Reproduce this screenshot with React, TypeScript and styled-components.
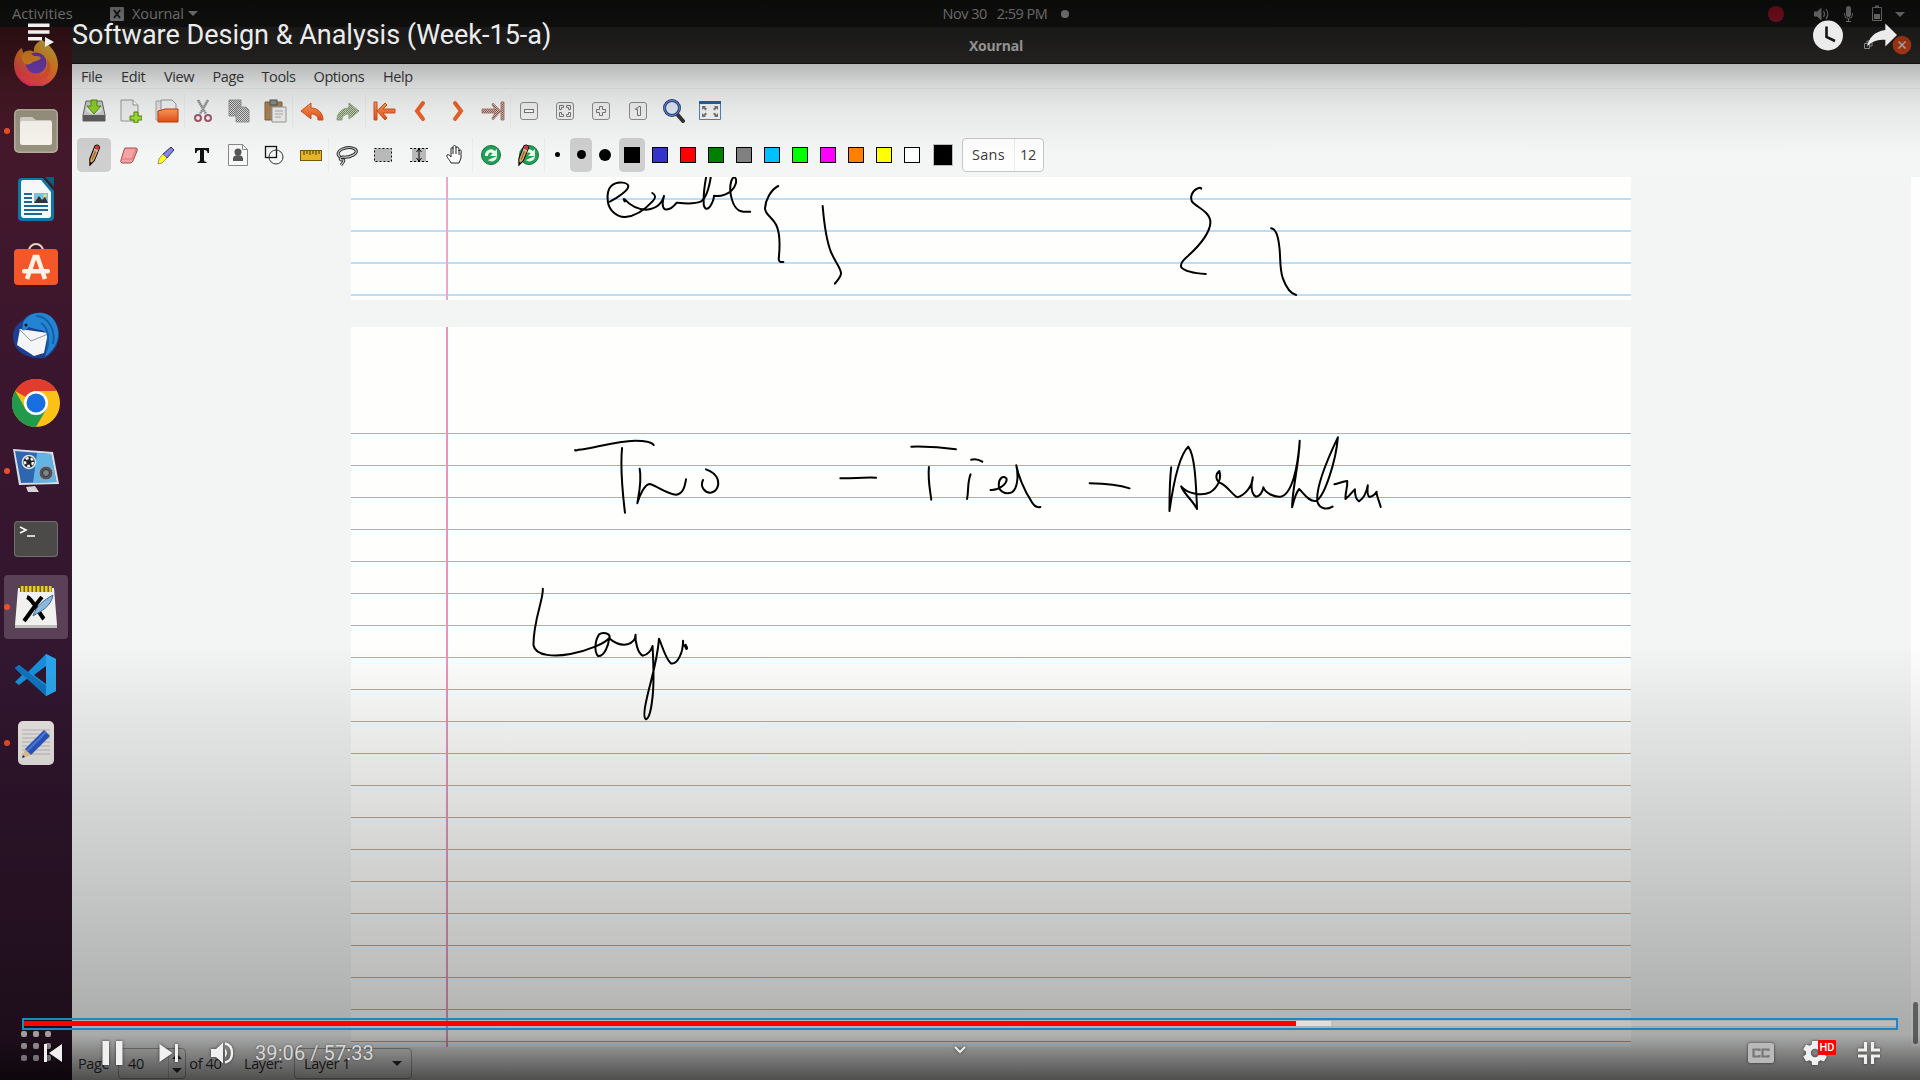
import React from "react";
import styled, { createGlobalStyle, css } from "styled-components";

const GlobalStyle = createGlobalStyle`
  html, body { margin: 0; padding: 0; background: #000; overflow: hidden; }
  * { box-sizing: border-box; }
  svg { display: block; flex: none; }
`;

const ui = `"Open Sans", "Noto Sans", sans-serif`;

const Screen = styled.div`
  position: relative;
  width: 1920px;
  height: 1080px;
  overflow: hidden;
  display: flex;
  flex-direction: column;
  font-family: ${ui};
`;

/* ---------- desktop panel ---------- */
const TopPanel = styled.header`
  height: 27px;
  flex: none;
  display: grid;
  grid-template-columns: 1fr auto 1fr;
  align-items: center;
  background: #191817;
  color: #c6c6c6;
  font-size: 14.5px;
  letter-spacing: -0.1px;
`;
const PanelLeft = styled.div`
  display: flex;
  align-items: center;
  padding-left: 12px;
`;
const Activities = styled.span`
  width: 98px;
  letter-spacing: 0.1px;
`;
const AppName = styled.span`
  margin: 0 4px 0 8px;
`;
const PanelClock = styled.div`
  display: flex;
  align-items: center;
  white-space: pre;
  padding-left: 92px;
  letter-spacing: -0.5px;
`;
const ClockDot = styled.i`
  width: 8px;
  height: 8px;
  border-radius: 50%;
  background: #c6c6c6;
  margin-left: 14px;
`;
const PanelRight = styled.div`
  display: flex;
  justify-content: flex-end;
  padding-right: 14px;
`;

/* ---------- window ---------- */
const Body = styled.div`
  flex: 1;
  display: flex;
  min-height: 0;
`;
const Dock = styled.nav`
  width: 72px;
  flex: none;
  display: flex;
  flex-direction: column;
  align-items: center;
  padding-top: 2px;
  background: linear-gradient(#45171d 0, #44182a 120px, #3a162e 340px, #321630 640px, #2a1426 100%);
`;
const DockItem = styled.div<{ $running?: boolean; $active?: boolean }>`
  width: 64px;
  height: 64px;
  margin: 2px 0;
  flex: none;
  display: flex;
  align-items: center;
  justify-content: center;
  position: relative;
  border-radius: 4px;
  background: ${(p) => (p.$active ? "#5a4158" : "transparent")};
  ${(p) =>
    p.$running &&
    css`
      &::before {
        content: "";
        position: absolute;
        left: 0;
        top: 29px;
        width: 6px;
        height: 6px;
        border-radius: 50%;
        background: #e9502a;
      }
    `}
`;
const AppsGrid = styled.div`
  margin-top: auto;
  margin-bottom: 19px;
  display: grid;
  grid-template-columns: repeat(3, 6px);
  gap: 6px;
`;
const AppsDot = styled.i`
  width: 6px;
  height: 6px;
  border-radius: 2px;
  background: #e8dfe6;
`;
const Window = styled.main`
  flex: 1;
  min-width: 0;
  display: flex;
  flex-direction: column;
  background: #f4f5f5;
  color: #3b3b3b;
`;
const TitleBar = styled.div`
  height: 37px;
  flex: none;
  display: grid;
  grid-template-columns: 1fr auto 1fr;
  align-items: center;
  background: linear-gradient(#2a2928, #2e2c2b);
  border-bottom: 1px solid #161514;
  color: #d8d6d3;
  font-weight: 700;
  font-size: 14px;
`;
const WindowTitle = styled.span`
  letter-spacing: -0.2px;
`;
const WindowButtons = styled.div`
  display: flex;
  justify-content: flex-end;
  align-items: center;
  padding-right: 8px;
`;
const MenuBar = styled.div`
  height: 25px;
  flex: none;
  display: flex;
  align-items: center;
  padding-left: 9px;
  border-bottom: 1px solid #e9e9e8;
  font-size: 14.5px;
`;
const MenuItem = styled.span<{ $w: number }>`
  width: ${(p) => p.$w}px;
  letter-spacing: -0.4px;
`;
const Toolbar = styled.div<{ $h: number }>`
  height: ${(p) => p.$h}px;
  flex: none;
  display: flex;
  align-items: center;
  padding: 0 0 1.5px 4px;
`;
const Tool = styled.div<{ $on?: boolean; $sep?: boolean; $w?: number }>`
  width: ${(p) => p.$w ?? 36.08}px;
  height: 34px;
  flex: none;
  display: flex;
  align-items: center;
  justify-content: center;
  ${(p) => p.$sep && "border-right: 1px solid #ebecec; padding-left: 1px;"}
  ${(p) =>
    p.$on &&
    css`
      background: #cfcfcf;
      background-clip: padding-box;
      border: solid transparent;
      border-width: 0 1px;
      border-radius: 5px;
    `}
`;
const Dot = styled.i<{ $s: number }>`
  width: ${(p) => p.$s}px;
  height: ${(p) => p.$s}px;
  border-radius: 50%;
  background: #000;
`;
const Swatch = styled.i<{ $c: string }>`
  width: 16px;
  height: 16px;
  border: 1px solid #000;
  background: ${(p) => p.$c};
`;
const CurrentColor = styled.i`
  width: 20px;
  height: 22px;
  border: 1px solid #bdbdbd;
  background: #000;
`;
const FontButton = styled.div`
  width: 82px;
  height: 34px;
  margin-left: 2px;
  display: flex;
  border: 1px solid #c6c6c6;
  border-radius: 4px;
  background: #fefefe;
  font-size: 14.5px;
  line-height: 31px;
`;
const FontName = styled.span`
  width: 52px;
  padding-left: 9px;
  letter-spacing: 0.3px;
  border-right: 1px solid #ececec;
`;
const FontSize = styled.span`
  padding-left: 5px;
  letter-spacing: -0.4px;
`;

/* ---------- canvas ---------- */
const Canvas = styled.section`
  flex: 1;
  min-height: 0;
  display: flex;
  background: #f3f5f4;
  overflow: hidden;
`;
const Pages = styled.div`
  flex: 1;
  display: flex;
  flex-direction: column;
  padding-left: 279px;
`;
const Paper = styled.div<{ $h: number; $first: number; $line: string; $lw: number; $margin: string }>`
  position: relative;
  width: 1280px;
  height: ${(p) => p.$h}px;
  flex: none;
  margin-bottom: 27px;
  background:
    linear-gradient(90deg, transparent 95px, ${(p) => p.$margin} 95px, ${(p) => p.$margin} 97px, transparent 97px),
    repeating-linear-gradient(${(p) => p.$line} 0 ${(p) => p.$lw}px, transparent ${(p) => p.$lw}px 32px)
      0 ${(p) => p.$first}px / 100% ${(p) => p.$h - p.$first}px no-repeat,
    #fefefd;
`;
const Ink = styled.svg`
  position: absolute;
  left: 0;
  top: 0;
  fill: none;
  stroke: #000;
  stroke-width: 2;
  stroke-linecap: round;
  stroke-linejoin: round;
  path { vector-effect: non-scaling-stroke; }
`;
const ScrollTrack = styled.div`
  width: 9px;
  background: #fefefe;
  display: flex;
  align-items: flex-end;
  justify-content: center;
  padding-bottom: 3px;
`;
const ScrollThumb = styled.div`
  width: 5px;
  height: 42px;
  border-radius: 3px;
  background: #828483;
`;
const StatusBar = styled.footer`
  height: 33px;
  flex: none;
  display: flex;
  align-items: center;
  padding-left: 6px;
  font-size: 14.5px;
  letter-spacing: -0.4px;
  background: #f2f2f1;
  color: #333;
`;
const StatusText = styled.span<{ $w: number }>`
  width: ${(p) => p.$w}px;
  white-space: nowrap;
`;
const Field = styled.div<{ $w: number }>`
  width: ${(p) => p.$w}px;
  height: 31px;
  display: flex;
  align-items: center;
  justify-content: space-between;
  padding-left: 9px;
  border: 1px solid #a9a9a9;
  border-radius: 4px;
`;
const Spinner = styled.span`
  width: 17px;
  height: 29px;
  display: flex;
  flex-direction: column;
  align-items: center;
  justify-content: space-around;
  border-left: 1px solid #cacaca;
`;
const Caret = styled.i<{ $up?: boolean; $m?: number }>`
  width: 0;
  height: 0;
  margin-right: ${(p) => p.$m ?? 0}px;
  border: solid transparent;
  border-width: ${(p) => (p.$up ? "0 5px 5px" : "5px 5px 0")};
  ${(p) => (p.$up ? "border-bottom-color" : "border-top-color")}: currentColor;
`;

/* ---------- video player chrome, lies over the desktop ---------- */
const Player = styled.div`
  position: absolute;
  inset: 0;
  display: flex;
  flex-direction: column;
  font-family: Roboto, sans-serif;
  color: #ececec;
  background:
    linear-gradient(rgba(0,0,0,.56) 0, rgba(0,0,0,.4) 27px, rgba(0,0,0,.25) 64px, rgba(0,0,0,.11) 88px, rgba(0,0,0,.05) 112px, transparent 155px),
    linear-gradient(transparent 645px, rgba(0,0,0,.07) 725px, rgba(0,0,0,.17) 860px, rgba(0,0,0,.25) 970px, rgba(0,0,0,.305) 1035px, rgba(0,0,0,.42) 1048px, rgba(0,0,0,.68) 1080px);
`;
const PlayerTop = styled.div`
  height: 70px;
  display: flex;
  align-items: center;
  padding: 0 21px 0 28px;
`;
const VideoTitle = styled.h1`
  flex: 1;
  margin: 0 0 0 17px;
  font-size: 27px;
  font-weight: 400;
  line-height: 32px;
  letter-spacing: -0.01px;
  white-space: nowrap;
`;
const Progress = styled.div`
  margin: auto 22px 0;
  height: 12px;
  flex: none;
  display: flex;
  align-items: flex-start;
  padding-top: 1px;
  border: 2px solid #1f86c6;
`;
const Bar = styled.i<{ $w?: number; $c: string }>`
  height: 5px;
  ${(p) => (p.$w ? `width: ${p.$w}px;` : "flex: 1;")}
  background: ${(p) => p.$c};
`;
const Controls = styled.div`
  height: 50px;
  flex: none;
  display: grid;
  grid-template-columns: 1fr auto 1fr;
  padding: 0 39px 4px 42px;
  svg { filter: drop-shadow(0 0 1.5px rgba(0,0,0,.6)); }
`;
const Group = styled.div<{ $end?: boolean }>`
  display: flex;
  align-items: center;
  justify-content: ${(p) => (p.$end ? "flex-end" : "flex-start")};
`;
const Collapse = styled.div`
  padding: 15px 3px 0 0;
`;
const Spacer = styled.span<{ $w: number }>`
  width: ${(p) => p.$w}px;
  flex: none;
`;
const Time = styled.span`
  font-size: 20px;
  letter-spacing: 0.08px;
  color: #d8d8d8;
  text-shadow: 0 0 2px rgba(0,0,0,.5);
`;
const GearBox = styled.div`
  position: relative;
  margin: 0 30px 0 28px;
`;
const HdBadge = styled.b`
  position: absolute;
  left: 15px;
  top: -1px;
  width: 18px;
  height: 15px;
  font-size: 11px;
  line-height: 15px;
  font-weight: 500;
  text-align: center;
  background: #f00;
  color: #fff;
  border-radius: 1px;
`;

/* ---------- dock icons ---------- */
const Firefox = () => (
  <svg width="46" height="46" viewBox="0 0 46 46">
    <defs>
      <linearGradient id="ff" x1=".8" y1="0" x2=".3" y2="1">
        <stop offset="0" stopColor="#ffe04a" /><stop offset=".45" stopColor="#ff8a25" /><stop offset="1" stopColor="#f0236a" />
      </linearGradient>
    </defs>
    <path d="M29 0C36 4 45 13 45 25A22 22 0 0 1 1 25C1 17 4 11 9 8l1 5C14 10 18 10 21 12 20 6 24 2 29 0z" fill="url(#ff)" />
    <circle cx="23" cy="23" r="10.5" fill="#7a42c4" />
    <path d="M9 14c5-3 9-1 12 2 3 0 6 0 7 2-2 3-6 3-8 4-2 2-5 3-8 2-3-3-4-7-3-10z" fill="#ff9a2a" />
    <path d="M2 24c3 12 13 15 21 13 9-2 13-9 11-18 6 7 3 18-4 22-10 7-27 1-28-17z" fill="#f7503c" opacity=".55" />
  </svg>
);
const Files = () => (
  <svg width="44" height="44" viewBox="0 0 44 44">
    <rect width="44" height="44" rx="5" fill="#b5ae9d" /><rect x="1.500" y="1.500" width="41" height="41" rx="4" fill="#989280" />
    <path d="M6 10q0-2 2-2h10l4 3h14q2 0 2 2v5H6z" fill="#d6d1c6" />
    <rect x="6" y="12" width="32" height="24" rx="2.500" fill="#f8f5ee" />
  </svg>
);
const Writer = () => (
  <svg width="38" height="46" viewBox="0 0 38 46">
    <path d="M5 2h21l11 13v26q0 4-4 4H5q-4 0-4-4V6q0-4 4-4z" fill="#0d79a2" />
    <path d="M6 4h18l10 12v23q0 3-3 3H7q-3 0-3-3V7q0-3 2-3z" fill="#f4f8f9" />
    <path d="M28 1h9v10z" fill="#0e5d7f" />
    <path d="M7 18h8M7 22h8M7 26h8M7 30h24M7 34h24M7 38h18" stroke="#1a6a92" strokeWidth="2" />
    <rect x="17" y="17" width="14" height="10" fill="#7cc0dc" /><path d="M17 27l5-7 3 4 3-3 3 6z" fill="#333" /><circle cx="28" cy="19.500" r="1.500" fill="#fd5" />
  </svg>
);
const Software = () => (
  <svg width="44" height="48" viewBox="0 2 44 48">
    <path d="M15 10a7 7 0 0 1 14 0" fill="none" stroke="#e8d3b5" strokeWidth="2" />
    <rect y="8" width="44" height="36" rx="4" fill="#f4572a" />
    <path d="M13 38L20.500 16h3L31 38" fill="none" stroke="#fff1e3" strokeWidth="4.500" />
    <rect x="8" y="28" width="28" height="4.500" rx="2" fill="#fff1e3" />
  </svg>
);
const Thunderbird = () => (
  <svg width="48" height="48" viewBox="0 0 48 48">
    <path d="M14 6C24-2 40 2 45 14c5 13 0 24-8 30l-4 3C18 49 5 42 2 32-1 22 3 14 10 10z" fill="#1c3f94" />
    <path d="M8 18l28 4-4 20-10 3L5 34z" fill="#f4f5f8" /><path d="M7 18l12 12 17-7" fill="none" stroke="#999" strokeWidth="1" />
    <path d="M11 12C15 1 34-3 42 9c9 14 3 28-9 37 3-10 4-16 1-25-6-3-12-3-17-5-3 3-5 4-7 3z" fill="#2385d2" />
    <path d="M24 5c12 0 20 14 17 28M29 12c8 5 8 17 6 27" fill="none" stroke="#155ea8" strokeWidth="2" /><circle cx="14" cy="14" r="1.500" fill="#111" />
  </svg>
);
const Chrome = () => (
  <svg width="48" height="48" viewBox="0 0 48 48">
    <circle cx="24" cy="24" r="24" fill="#fbc116" />
    <path d="M24 24L3.200 12A24 24 0 0 1 44.800 12z" fill="#e33b2e" /><path d="M3.200 12A24 24 0 0 0 24 48l10.400-18L13.600 30z" fill="#229a4b" />
    <path d="M24 12h20.800L34 30z" fill="#fbc116" />
    <circle cx="24" cy="24" r="12" fill="#fff" /><circle cx="24" cy="24" r="9.500" fill="#1a6fe0" />
  </svg>
);
const ScreenRecorder = () => (
  <svg width="46" height="46" viewBox="0 0 46 46">
    <path d="M0 1l40 3 6 32-40 1z" fill="#d9dde4" /><path d="M2 3l36 3 5.500 28L8 35z" fill="#2f66b0" /><path d="M24 5l14 1 5.500 28L20 35z" fill="#62b4e5" />
    <circle cx="16" cy="14" r="6.500" fill="#222" stroke="#dfe6ec" strokeWidth="1.500" /><circle cx="16" cy="14" r="4" fill="none" stroke="#e8eef2" strokeWidth="2.500" strokeDasharray="3 2" />
    <circle cx="33" cy="25" r="7" fill="#50565d" stroke="#aab" /><circle cx="33" cy="25" r="3.500" fill="#7d858d" stroke="#333" />
    <path d="M13 39l9-1 4 6H15z" fill="#d5d5d5" />
  </svg>
);
const Terminal = () => (
  <svg width="44" height="36" viewBox="0 0 44 36">
    <rect width="44" height="36" rx="4" fill="#72706e" /><rect x="1" y="1" width="42" height="34" rx="3" fill="#4b4a49" />
    <path d="M6 6l6 3-6 3M13 15h8" fill="none" stroke="#fff" strokeWidth="1.600" />
  </svg>
);
const XournalIcon = () => (
  <svg width="42" height="44" viewBox="0 0 42 44">
    <path d="M3 3h36l3 37H0z" fill="#f1f1ef" /><path d="M0 40h42v3H0z" fill="#bdbdbb" />
    <path d="M5 1h32v6H5z" fill="#6f5f10" /><path d="M6 4h31" stroke="#e8cc2b" strokeWidth="6" strokeDasharray="2.500 1.500" />
    <path d="M12 12c6 2 13 18 17 22M27 12C20 20 14 30 9 36" stroke="#000" strokeWidth="4" fill="none" />
    <path d="M38 10c-2 12-12 16-20 21 3-10 11-16 20-21z" fill="#8bb8dc" stroke="#3c6d98" />
  </svg>
);
const VsCode = () => (
  <svg width="44" height="44" viewBox="0 0 44 44">
    <path d="M32 1L14 19 5 12 1 15l7 7-7 7 4 3 9-7 18 18 10-5V6zM32 13v18L20 22z" fill="#1a8fdc" fillRule="evenodd" />
    <path d="M32 1l10 5v32l-10 5z" fill="#2ba5ee" /><path d="M1 15l4-3 27 21v10z" fill="#0f74bd" />
  </svg>
);
const TextEditor = () => (
  <svg width="38" height="46" viewBox="0 0 38 46">
    <rect x="1" y="1" width="36" height="44" rx="5" fill="#ece9e6" />
    <path d="M5 10h28M5 14h28M5 18h28M5 22h28M5 26h28M5 30h28M5 34h28" stroke="#bbb" />
    <path d="M5 38l3-9 6 6z" fill="#e9c79a" /><path d="M8 29L27 10l6 6-19 19z" fill="#2c58c4" /><path d="M5 38l1-3 2 2z" fill="#222" />
    <path d="M10 31l19-19" stroke="#5481e2" strokeWidth="2" />
  </svg>
);

/* ---------- toolbar icons, drawn on a 24 x 24 grid ---------- */
const I = ({ children }: { children: React.ReactNode }) => (
  <svg width="24" height="24" viewBox="0 0 24 24">
    <defs>
      <linearGradient id="org" x1="0" y1="0" x2="0" y2="1"><stop offset="0" stopColor="#ffa060" /><stop offset="1" stopColor="#e84e15" /></linearGradient>
      <pattern id="chk" width="2" height="2" patternUnits="userSpaceOnUse"><rect width="2" height="2" fill="#dcdcdc" /><rect width="1" height="1" fill="#777" /><rect x="1" y="1" width="1" height="1" fill="#777" /></pattern>
      <pattern id="chkg" width="2" height="2" patternUnits="userSpaceOnUse"><rect width="2" height="2" fill="#c6d2b8" /><rect width="1" height="1" fill="#7b8c69" /><rect x="1" y="1" width="1" height="1" fill="#7b8c69" /></pattern>
      <pattern id="chkr" width="2" height="2" patternUnits="userSpaceOnUse"><rect width="2" height="2" fill="#dcc0b8" /><rect width="1" height="1" fill="#8d5a4c" /><rect x="1" y="1" width="1" height="1" fill="#8d5a4c" /></pattern>
    </defs>
    {children}
  </svg>
);
const Key = ({ children }: { children: React.ReactNode }) => (
  <I>
    <rect x="3.500" y="3.500" width="17" height="17" rx="2.500" fill="#f1f1f1" stroke="#8c8c8c" />
    <g fill="none" stroke="#777">{children}</g>
  </I>
);
const Pencil = () => (
  <g transform="rotate(22 12 12)">
    <path d="M9.500 3q2.500-3 5 0v14l-2.500 6-2.500-6z" fill="#d9a465" stroke="#000" />
    <path d="M10 3q2-2.500 4 0v3h-4z" fill="#d33" /><path d="M10 6h4v2h-4z" fill="#bbb" /><path d="M12 8v9" stroke="#8a5720" /><path d="M11 20h2l-1 3z" fill="#000" />
  </g>
);
const Recycle = () => (
  <>
    <circle cx="12" cy="12" r="9.500" fill="#22a055" stroke="#12743a" />
    <path d="M6 13a6 6 0 0 1 10-5l2-2v7h-7l2.500-2.500C12 8.500 9 9.500 9 13zM18 13c0 5-6 7-9 4" fill="#e5fbec" />
  </>
);

const row1: { sep?: boolean; el: React.ReactNode }[] = [
  { el: <I><path d="M4 2h16l3 14v6H1v-6z" fill="#c9c9c9" stroke="#666" /><path d="M1 16h22v6H1z" fill="#5d5d5d" /><ellipse cx="12" cy="10" rx="8" ry="5" fill="#e5e5e5" /><path d="M9 1h6v6h4l-7 8-7-8h4z" fill="#8ed029" stroke="#4f8a0b" /></I> },
  { el: <I><path d="M3 1h12l5 5v16H3z" fill="#ededed" stroke="#999" /><path d="M15 1v5h5" fill="#fff" stroke="#999" /><path d="M16 13h4v4h4v4h-4v3h-4v-3h-4v-4h4z" fill="#a3db35" stroke="#4f8a0b" /></I> },
  { el: <I><path d="M1 2h6l2 3v16H1z" fill="#e2e2e2" stroke="#aaa" /><path d="M6 1h11l4 4v10H6z" fill="#f4f4f4" stroke="#999" /><path d="M3 12l4-1 3-1h13v13H3z" fill="url(#org)" stroke="#c33c0b" /></I>, sep: true },
  { el: <I><path d="M7 1l8 14M17 1L9 15" stroke="#8b8b8b" strokeWidth="2.500" strokeDasharray="1.500 .5" /><circle cx="7" cy="19" r="3" fill="none" stroke="#a3586a" strokeWidth="2" /><circle cx="17" cy="19" r="3" fill="none" stroke="#a3586a" strokeWidth="2" /></I> },
  { el: <I><path d="M2 1h12v16H2z" fill="url(#chk)" stroke="#999" /><path d="M9 8h10l3 3v12H9z" fill="url(#chk)" stroke="#999" /></I> },
  { el: <I><path d="M2 3h17v18H2z" fill="#a98256" stroke="#80603c" /><rect x="7" y="1" width="7" height="5" fill="#8d8d8d" stroke="#555" /><path d="M9 8h14v15H9z" fill="#eee" stroke="#999" /><path d="M12 12h8M12 15h8M12 18h6" stroke="#aaa" /></I>, sep: true },
  { el: <I><path d="M1 12L11 4v5c7 0 12 5 12 12h-5c0-4-3-6-7-6v5z" fill="url(#org)" stroke="#d4531e" /></I> },
  { el: <I><path d="M23 12L13 4v5C6 9 1 14 1 21h5c0-4 3-6 7-6v5z" fill="url(#chkg)" stroke="#93a47f" /></I>, sep: true },
  { el: <I><path d="M2 3h3v18H2zM5 12l8-8 2 2-4 4h12v4H11l4 5-2 2z" fill="url(#org)" stroke="#d4531e" /></I> },
  { el: <I><path d="M15 4L9 12l6 8" fill="none" stroke="#ee6329" strokeWidth="4" strokeLinecap="round" /></I> },
  { el: <I><path d="M11 4l6 8-6 8" fill="none" stroke="#ee6329" strokeWidth="4" strokeLinecap="round" /></I> },
  { el: <I><path d="M20 3h3v18h-3zM20 12l-8-8-1 2 3 4H1v4h13l-3 5 1 2z" fill="url(#chkr)" stroke="#a98478" /></I>, sep: true },
  { el: <Key><rect x="7.500" y="10.500" width="9" height="3" fill="#fff" /></Key> },
  { el: <Key><path d="M6.500 10.500v-4h4v2h-2v2zM13.500 6.500h4v4h-2v-2h-2zM6.500 13.500v4h4v-2h-2v-2zM17.500 13.500v4h-4v-2h2v-2z" /></Key> },
  { el: <Key><path d="M10.500 7.500h3v3h3v3h-3v3h-3v-3h-3v-3h3z" /></Key> },
  { el: <Key><path d="M9.500 9.500q3 0 3-2h2v9h-3v-6h-2z" /></Key> },
  { el: <I><path d="M15 15l6 7" stroke="#333" strokeWidth="4" strokeLinecap="round" /><circle cx="10" cy="9" r="7.500" fill="#dfe7f3" stroke="#27417e" strokeWidth="3" /><circle cx="10" cy="9" r="7.500" fill="none" stroke="#6f90d3" strokeWidth="1" /></I> },
  { el: <I><path d="M1.500 2.500h21v18h-21z" fill="#f4f4f4" stroke="#5580b8" /><path d="M1 2h22v3H1z" fill="#2360ae" /><path d="M4 11V7h4L7 8l2 2-1.500 1.500L5.500 9.500zM20 11V7h-4l1 1-2 2 1.500 1.500 2-2zM4 14v4h4l-1-1 2-2-1.500-1.500-2 2zM20 14v4h-4l1-1-2-2 1.500-1.500 2 2z" fill="#777" /></I> },
];
const row2: { on?: boolean; sep?: boolean; el: React.ReactNode }[] = [
  { on: true, el: <I><Pencil /></I> },
  { el: <I><path d="M7 5h11q2 0 1 3l-4 10q-1 2-3 2H4q-2-1-1-3L6 7z" fill="#f4a3a3" stroke="#aa4b4b" /><path d="M3 16h11l4-10" fill="none" stroke="#d77" /></I> },
  { el: <I><path d="M17 4l3 3-7 8-4-4z" fill="#8484f0" stroke="#111" strokeWidth=".8" /><path d="M9 11l4 4-5 5-4 1 1-5z" fill="#ffff20" stroke="#555" strokeWidth=".6" /></I> },
  { el: <I><path d="M5 5h14v5h-1.500q0-3-3.500-3v10q0 2 2.500 2v1h-9v-1Q10 19 10 17V7Q6.500 7 6.500 10H5z" fill="#111" /></I> },
  { el: <I><path d="M2.500 1.500h14l5 5v16h-19z" fill="#f8f8f8" stroke="#888" /><path d="M16.500 1.500v5h5" fill="none" stroke="#888" /><circle cx="12" cy="9" r="3.500" fill="#555" /><path d="M7 18q-1-6 5-6t5 6z" fill="#555" /></I> },
  { el: <I><rect x="3.500" y="3.500" width="11" height="11" fill="none" stroke="#111" strokeWidth="1.300" /><circle cx="14" cy="14" r="7" fill="none" stroke="#333" /></I> },
  { el: <I><rect x="1.500" y="7.500" width="21" height="10" fill="#e5b428" stroke="#77580b" /><path d="M5 8v4M8 8v3M11 8v4M14 8v3M17 8v4M20 8v3" stroke="#493604" /></I>, sep: true },
  { el: <I><path d="M5 14C-2 8 12 2 20 6c5 4-5 9-12 8-3 0-4 3-1 3 3-1 2 2-1 5" fill="none" stroke="#222" strokeWidth="3" /><path d="M5 14C-2 8 12 2 20 6c5 4-5 9-12 8-3 0-4 3-1 3 3-1 2 2-1 5" fill="none" stroke="#ccc" strokeWidth="1.200" /></I> },
  { el: <I><rect x="3.500" y="5.500" width="17" height="13" fill="#b9b9b9" stroke="#000" strokeDasharray="2 2" /></I> },
  { el: <I><rect x="5" y="5" width="14" height="14" fill="#b9b9b9" /><path d="M3 5.500h18M3 18.500h18" stroke="#000" strokeDasharray="2 2" /><path d="M12 6v12M9.500 9L12 6l2.500 3M9.500 15l2.500 3 2.500-3" fill="none" stroke="#000" /></I> },
  { el: <I><path d="M8 20c-1-3-5-6-4-8 2-1 3 1 4 2V6c0-2 2-2 2 0V4c0-2 3-2 3 0v1c0-2 3-1 3 1v2c1-2 3-1 2 2v5l-2 5z" fill="#fff" stroke="#222" /><path d="M10 6v5M13 5v6M16 7v5" stroke="#222" /></I>, sep: true },
  { el: <I><Recycle /></I> },
  { el: <I><g transform="translate(2 0)"><Recycle /></g><g transform="translate(-4 0)"><Pencil /></g></I>, sep: true },
];
const colors = ["#000", "#3333cc", "#f00", "#008000", "#808080", "#00c0ff", "#0f0", "#f0f", "#ff8000", "#ff0", "#fff"];
const menus: [string, number][] = [["File", 40], ["Edit", 43], ["View", 48.5], ["Page", 49], ["Tools", 52], ["Options", 69.5], ["Help", 40]];

export default function App() {
  return (
    <Screen>
      <GlobalStyle />
      <TopPanel>
        <PanelLeft>
          <Activities>Activities</Activities>
          <svg width="14" height="14" viewBox="0 0 14 14"><rect width="14" height="14" rx="1" fill="#bcbcbc" /><path d="M4 3l6 8M10 3l-6 8" stroke="#222" strokeWidth="2" /></svg>
          <AppName>Xournal</AppName>
          <Caret />
        </PanelLeft>
        <PanelClock>Nov 30{"   "}2:59 PM<ClockDot /></PanelClock>
        <PanelRight>
          <svg width="140" height="26" viewBox="1766 0 140 26">
            <circle cx="1776" cy="13" r="8" fill="#b8172c" />
            <g fill="#b4b4b4" stroke="none">
              <path d="M1814 10.500h3l4.500-4v13l-4.500-4h-3z" />
              <path d="M1823.500 10q2 3 0 6M1826 8q3.500 5 0 10" fill="none" stroke="#b4b4b4" strokeWidth="1.200" />
              <rect x="1846" y="5" width="5" height="11" rx="2.500" />
              <path d="M1844.500 12v1.500q0 4 4 4t4-4V12M1848.500 18v3M1846 20.500h5" fill="none" stroke="#b4b4b4" />
              <path d="M1872.500 6.500h9v13h-9z" fill="none" stroke="#b4b4b4" /><path d="M1875 4.500h4v2h-4zM1874 13h6v5h-6z" />
              <path d="M1895 11h10l-5 5z" />
            </g>
          </svg>
        </PanelRight>
      </TopPanel>
      <Body>
        <Dock>
          <DockItem><Firefox /></DockItem>
          <DockItem $running><Files /></DockItem>
          <DockItem><Writer /></DockItem>
          <DockItem><Software /></DockItem>
          <DockItem><Thunderbird /></DockItem>
          <DockItem><Chrome /></DockItem>
          <DockItem $running><ScreenRecorder /></DockItem>
          <DockItem><Terminal /></DockItem>
          <DockItem $running $active><XournalIcon /></DockItem>
          <DockItem><VsCode /></DockItem>
          <DockItem $running><TextEditor /></DockItem>
          <AppsGrid>{Array.from({ length: 9 }, (_, i) => <AppsDot key={i} />)}</AppsGrid>
        </Dock>
        <Window>
          <TitleBar>
            <span />
            <WindowTitle>Xournal</WindowTitle>
            <WindowButtons>
              <svg width="48" height="20" viewBox="1864 35 48 20">
                <path d="M1864.500 43.500h5v5h-5zM1867 43v-2h5v5h-2" fill="none" stroke="#c5c5c5" />
                <circle cx="1902" cy="45" r="9.300" fill="#e2491b" />
                <path d="M1898.500 41.500l7 7M1905.500 41.500l-7 7" stroke="#eee" strokeWidth="1.500" />
              </svg>
            </WindowButtons>
          </TitleBar>
          <MenuBar>{menus.map(([m, w]) => <MenuItem key={m} $w={w}>{m}</MenuItem>)}</MenuBar>
          <Toolbar $h={45}>{row1.map((t, i) => <Tool key={i} $w={36.24} $sep={t.sep}>{t.el}</Tool>)}</Toolbar>
          <Toolbar $h={43}>
            {row2.map((t, i) => <Tool key={i} $on={t.on} $sep={t.sep}>{t.el}</Tool>)}
            <Tool $w={24}><Dot $s={5} /></Tool>
            <Tool $w={24} $on><Dot $s={9} /></Tool>
            <Tool $w={23}><Dot $s={12} /></Tool>
            <Spacer $w={2} />
            {colors.map((c, i) => <Tool key={c} $w={28} $on={i === 0}><Swatch $c={c} /></Tool>)}
            <Tool $w={34}><CurrentColor /></Tool>
            <FontButton><FontName>Sans</FontName><FontSize>12</FontSize></FontButton>
          </Toolbar>
          <Canvas>
            <Pages>
              <Paper $h={123} $first={21} $line="#bbdcfa" $lw={2} $margin="#efa6cc">
                <Ink width="1280" height="123" viewBox="351 177 1280 123">
                  <g transform="translate(540 160) scale(.510204 .333333)">
                    <path d="M137 125C150 115 175 90 173 77C170 66 155 66 148 70C135 77 131 100 133 125C135 150 150 172 167 171C185 169 205 150 220 125C228 113 227 105 220 99" />
                    <path d="M166 124C164 118 163 116 166 118C175 133 190 148 208 149C225 147 238 135 243 108C240 125 238 142 245 148C255 151 262 140 268 128C280 130 300 134 315 125C325 115 332 80 335 48" />
                    <path d="M326 48C322 80 320 110 321 135C323 148 328 150 333 140C338 128 341 115 341 107C355 110 365 105 375 92C384 80 387 60 382 52C376 50 372 70 373 95C376 130 385 156 400 155L412 155" />
                    <path d="M467 78C452 90 442 120 441 145C441 165 455 170 463 195C471 220 470 265 468 295Q467 308 477 306" />
                    <path d="M554 138C556 175 560 235 570 275C578 305 590 325 590 340C590 352 582 362 578 371" />
                    <path d="M1296 86Q1296 80 1288 86C1277 95 1274 112 1278 125C1285 140 1314 155 1314 187C1313 220 1290 260 1270 288C1258 303 1254 312 1257 322C1265 336 1285 340 1305 342" />
                    <path d="M1433 205C1443 207 1447 230 1449 260C1452 290 1449 325 1456 355C1463 385 1470 400 1482 405" />
                  </g>
                </Ink>
              </Paper>
              <Paper $h={720} $first={106} $line="#8ab9de" $lw={1} $margin="#ea93bf">
                <Ink width="1280" height="720" viewBox="351 327 1280 720">
                  <g transform="translate(500 400) scale(.586735 .333333)">
                    <path d="M128 150Q128 154 134 149C155 147 195 123 230 122Q258 122 262 135" />
                    <path d="M208 144C205 200 209 280 213 338" />
                    <path d="M238 206C242 240 237 280 234 310C238 285 247 252 255 252C268 258 285 283 300 284C312 282 315 260 317 238" />
                    <path d="M346 240C340 262 350 279 359 278C370 275 374 255 371 238C367 220 358 212 351 208" />
                    <path d="M580 235C600 236 620 231 641 233" />
                    <path d="M701 140C725 139 750 141 777 148M731 201C729 240 733 270 735 299" />
                    <path d="M803 179Q813 175 822 185M802 223C796 250 799 275 796 297" />
                    <path d="M836 270C850 272 866 250 863 235C858 224 850 235 850 255C850 275 862 284 872 277C882 268 884 230 880 196C883 225 893 270 905 302Q912 325 921 321" />
                    <path d="M1005 250C1030 251 1055 255 1073 265" />
                    <path d="M1144 202C1141 245 1141 290 1141 333C1146 270 1155 170 1173 140C1184 165 1186 240 1188 327C1180 300 1165 280 1161 259C1172 283 1198 288 1210 277C1224 262 1230 235 1226 213C1219 222 1219 242 1228 249C1240 258 1248 285 1257 292C1270 285 1282 260 1283 232C1280 255 1280 280 1288 290C1295 290 1300 275 1301 262C1305 280 1320 292 1330 290C1350 285 1360 200 1363 122C1362 190 1350 270 1350 322C1353 300 1358 275 1362 267C1370 280 1378 305 1390 303C1405 295 1425 180 1428 112C1415 160 1390 260 1393 305C1397 328 1410 330 1419 320" />
                    <path d="M1422 253C1430 250 1437 244 1444 243C1445 262 1440 280 1441 297C1450 285 1455 270 1457 268C1457 285 1460 300 1464 304C1472 295 1477 275 1479 256C1478 275 1478 288 1482 291C1488 290 1493 280 1494 275C1494 290 1499 305 1501 321" />
                    <path d="M73 566C74 600 57 660 57 735C60 770 95 770 120 762C150 752 180 730 187 712C187 700 175 695 169 703C162 720 160 755 167 768C178 770 185 735 186 715C192 725 205 738 217 733C228 727 231 715 231 704C230 725 235 760 243 767C252 765 258 750 260 738C262 800 262 870 259 905C257 935 253 955 249 958C245 955 246 930 249 905C255 850 268 790 271 716C277 740 282 775 291 790C302 795 312 760 312 722L312 735L318 741" />
                    <path d="M316 736L318 745" strokeWidth="3" />
                  </g>
                </Ink>
              </Paper>
            </Pages>
            <ScrollTrack><ScrollThumb /></ScrollTrack>
          </Canvas>
          <StatusBar>
            <StatusText $w={40}>Page</StatusText>
            <Field $w={68}>40<Spinner><Caret $up /><Caret /></Spinner></Field>
            <StatusText $w={58}>&nbsp;of 40</StatusText>
            <StatusText $w={50}>Layer:</StatusText>
            <Field $w={118}>Layer 1<Caret $m={9} /></Field>
          </StatusBar>
        </Window>
      </Body>
      <Player>
        <PlayerTop>
          <svg width="27" height="28" viewBox="28 25 27 28" fill="#f0f0f0"><path d="M28 27.500h21.500v3.500H28zM28 34.300h21.500v3.500H28zM28 41h14v3.500H28zM45 41l9 5-9 5z" /></svg>
          <VideoTitle>Software Design &amp; Analysis (Week-15-a)</VideoTitle>
          <svg width="88" height="34" viewBox="1811 18 88 34">
            <circle cx="1828" cy="35.500" r="15" fill="#ececec" />
            <path d="M1826.500 26.500v10.500l8.500 4" fill="none" stroke="#161616" strokeWidth="2.600" />
            <path transform="translate(1862 15.300) scale(1.667 1.640)" d="M14 9V5l7 7-7 7v-4.100c-5 0-8.500 1-11 4.300 1-5 4-9.200 11-10.200z" fill="#ececec" />
          </svg>
        </PlayerTop>
        <Progress>
          <Bar $w={1272} $c="#f00" />
          <Bar $w={35} $c="rgba(255,255,255,.58)" />
          <Bar $c="rgba(255,255,255,.2)" />
        </Progress>
        <Controls>
          <Group>
            <svg width="192" height="28" viewBox="42 1039 192 28" fill="#f0f0f0">
              <path d="M44 1044h3v18h-3zM62 1044v18l-13-9z" />
              <path d="M102.500 1041h6.500v24h-6.500zM116 1041h6.500v24H116z" />
              <path d="M159.500 1044v18l13-9zM175 1044h3v18h-3z" />
              <path d="M211 1049h5l7-6.500v21l-7-6.500h-5z" /><path d="M225 1048.500q4 4.500 0 9z" />
              <path d="M225 1043.500q7 1.500 7 9.500t-7 9.500" fill="none" stroke="#f0f0f0" strokeWidth="2.400" />
            </svg>
            <Spacer $w={21} />
            <Time>39:06 / 57:33</Time>
          </Group>
          <Collapse><svg width="14" height="12" viewBox="0 0 14 12"><path d="M2 2l5 5 5-5" fill="none" stroke="#eee" strokeWidth="2" /></svg></Collapse>
          <Group $end>
            <svg width="28" height="22" viewBox="0 0 28 22"><rect x="1" y="1" width="26" height="20" rx="2.500" fill="#b9b9b9" /><path d="M12.500 9V7.500h-6v7h6V13M21.500 9V7.500h-6v7h6V13" fill="none" stroke="#777" strokeWidth="2.200" /></svg>
            <GearBox>
              <svg width="24" height="24" viewBox="2 2 20 20"><path fill="#f0f0f0" d="M19.430 12.980c.04-.32.07-.64.07-.98s-.03-.66-.07-.98l2.110-1.650c.19-.15.24-.42.12-.64l-2-3.460c-.12-.22-.39-.3-.61-.22l-2.490 1c-.52-.4-1.080-.73-1.690-.98l-.38-2.650C14.460 2.180 14.250 2 14 2h-4c-.25 0-.46.18-.49.42l-.38 2.650c-.61.25-1.170.59-1.690.98l-2.490-1c-.23-.09-.49 0-.61.22l-2 3.460c-.13.22-.07.49.12.64l2.110 1.650c-.04.32-.07.65-.07.98s.03.66.07.98l-2.110 1.650c-.19.15-.24.42-.12.64l2 3.460c.12.22.39.3.61.22l2.490-1c.52.4 1.080.73 1.690.98l.38 2.650c.03.24.24.42.49.42h4c.25 0 .46-.18.49-.42l.38-2.650c.61-.25 1.170-.59 1.690-.98l2.490 1c.23.09.49 0 .61-.22l2-3.460c.12-.22.07-.49-.12-.64l-2.110-1.650zM12 15.500a3.500 3.500 0 1 1 0-7 3.500 3.500 0 0 1 0 7z" /></svg>
              <HdBadge>HD</HdBadge>
            </GearBox>
            <svg width="24" height="24" viewBox="0 0 24 24"><path d="M8.500 1v8H1M15.500 1v8H23M8.500 23v-8H1M15.500 23v-8H23" fill="none" stroke="#f0f0f0" strokeWidth="3.200" /></svg>
          </Group>
        </Controls>
      </Player>
    </Screen>
  );
}
